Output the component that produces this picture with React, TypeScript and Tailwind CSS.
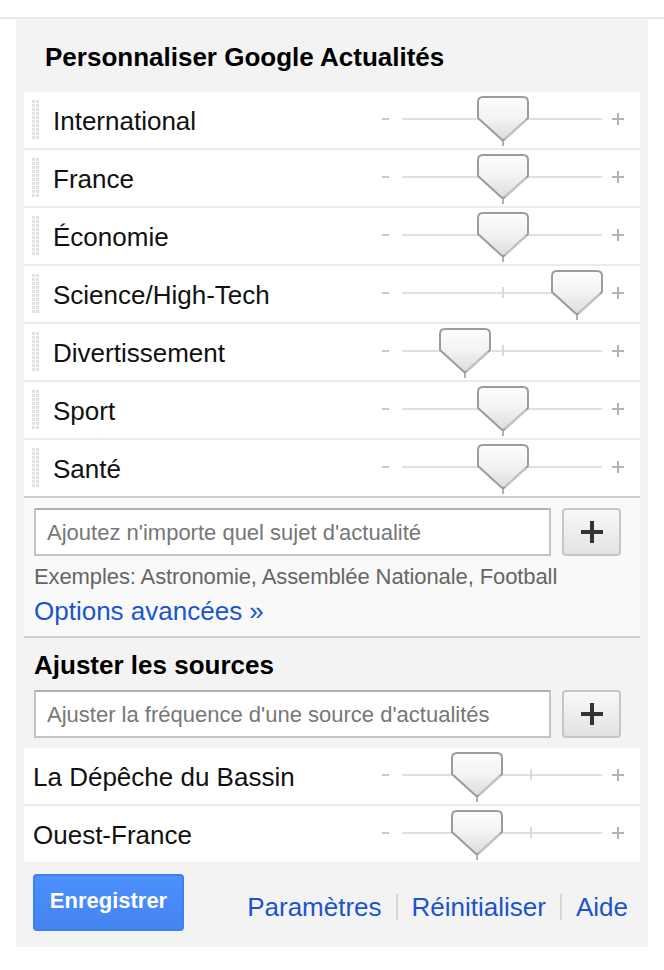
import React from "react";

function Thumb({ left }: { left: number }) {
  return (
    <svg
      className="absolute top-[4px]"
      style={{ left: left - 26 }}
      width="52"
      height="50"
      viewBox="0 0 52 50"
    >
      <defs>
        <linearGradient id="tg" x1="0" y1="0" x2="0" y2="1">
          <stop offset="0" stopColor="#fdfdfd" />
          <stop offset="0.5" stopColor="#f3f3f3" />
          <stop offset="1" stopColor="#dcdcdc" />
        </linearGradient>
      </defs>
      <line x1="26" y1="42" x2="26" y2="50" stroke="#b0b0b0" strokeWidth="2" />
      <path
        d="M6,1 H46 Q51,1 51,6 V22 L28,43 Q26,45 24,43 L1,22 V6 Q1,1 6,1 Z"
        fill="url(#tg)"
        stroke="#9c9c9c"
        strokeWidth="2"
      />
      <path d="M49,24 L28,43" stroke="#c4c4c4" strokeWidth="2" fill="none" />
    </svg>
  );
}

function Slider({ pos, tick = 127 }: { pos: number; tick?: number }) {
  return (
    <div className="relative w-[260px] h-[56px] shrink-0 ml-auto mr-[4px]">
      <div className="absolute left-[6px] top-[26px] w-[7px] h-[2px] bg-[#c9c9c9]" />
      <div className="absolute left-[26px] top-[26px] w-[200px] h-[2px] bg-[#e0e0e0]" />
      <div
        className="absolute top-[21px] w-[2px] h-[11px] bg-[#dadada]"
        style={{ left: tick - 1 }}
      />
      <svg className="absolute left-[236px] top-[21px]" width="12" height="12" viewBox="0 0 12 12">
        <rect x="5" y="0" width="2" height="12" fill="#b4b4b4" />
        <rect x="0" y="5" width="12" height="2" fill="#b4b4b4" />
      </svg>
      <Thumb left={pos} />
    </div>
  );
}

function Handle() {
  const rows = Array.from({ length: 10 });
  return (
    <svg className="shrink-0" width="8" height="40" viewBox="0 0 8 40">
      {rows.map((_, i) => (
        <g key={i}>
          <rect x="0" y={i * 4} width="3" height="3" fill="#e2e2e2" />
          <rect x="4" y={i * 4} width="3" height="3" fill="#e2e2e2" />
        </g>
      ))}
    </svg>
  );
}

function PlusButton() {
  return (
    <button className="w-[59px] h-[48px] shrink-0 rounded-[4px] border-2 border-[#c6c6c6] bg-gradient-to-b from-[#f8f8f8] to-[#e3e3e3] flex items-center justify-center">
      <svg width="22" height="22" viewBox="0 0 22 22">
        <rect x="9" y="0" width="4" height="22" fill="#333" />
        <rect x="0" y="9" width="22" height="4" fill="#333" />
      </svg>
    </button>
  );
}

const topics: { name: string; pos: number }[] = [
  { name: "International", pos: 127 },
  { name: "France", pos: 127 },
  { name: "Économie", pos: 127 },
  { name: "Science/High-Tech", pos: 201 },
  { name: "Divertissement", pos: 89 },
  { name: "Sport", pos: 127 },
  { name: "Santé", pos: 127 },
];

const sources = ["La Dépêche du Bassin", "Ouest-France"];

export default function App() {
  return (
    <div className="w-[664px] min-h-[970px] bg-white font-['Liberation_Sans',Arial,sans-serif] text-[#111]">
      <div className="h-[17px]" />
      <div className="h-[2px] bg-[#e8e8e8]" />
      <div className="ml-[16px] w-[632px] bg-[#f3f3f3] pt-[23px] pb-[16px]">
        <h1 className="pl-[29px] text-[26px] leading-[30px] font-bold text-black mb-[20px]">
          Personnaliser Google Actualités
        </h1>

        <div className="mx-[8px] bg-white">
          {topics.map((t, i) => (
            <div
              key={t.name}
              className={
                "flex items-center h-[58px] border-b-2 " +
                (i === topics.length - 1 ? "border-[#cfcfcf]" : "border-[#ebebeb]")
              }
            >
              <div className="pl-[8px] w-[29px] shrink-0 flex items-center">
                <Handle />
              </div>
              <span className="text-[26px] leading-[30px] pt-[2px] text-[#111]">{t.name}</span>
              <Slider pos={t.pos} />
            </div>
          ))}
        </div>

        <div className="mx-[8px] bg-[#f9f9f9] px-[10px] pt-[10px] pb-[10px] border-b-2 border-[#cfcfcf]">
          <div className="flex gap-[11px]">
            <div className="w-[517px] h-[48px] border-2 border-[#c4c4c4] border-t-[#b0b0b0] bg-white flex items-center pl-[11px]">
              <span className="text-[22px] text-[#777]">Ajoutez n'importe quel sujet d'actualité</span>
            </div>
            <PlusButton />
          </div>
          <div className="mt-[8px] text-[22px] leading-[26px] text-[#666] tracking-[-0.1px]">
            Exemples: Astronomie, Assemblée Nationale, Football
          </div>
          <div className="mt-[6px] text-[26px] leading-[30px] text-[#1a55cc]">Options avancées »</div>
        </div>

        <div className="mx-[8px] pt-[12px]">
          <h2 className="pl-[10px] text-[26px] leading-[30px] font-bold text-black">Ajuster les sources</h2>
          <div className="flex gap-[11px] px-[10px] mt-[10px]">
            <div className="w-[517px] h-[48px] border-2 border-[#c4c4c4] border-t-[#b0b0b0] bg-white flex items-center pl-[11px]">
              <span className="text-[22px] text-[#777]">Ajuster la fréquence d'une source d'actualités</span>
            </div>
            <PlusButton />
          </div>
          <div className="mt-[10px] bg-white">
            {sources.map((s, i) => (
              <div
                key={s}
                className={
                  "flex items-center " +
                  (i === 0 ? "h-[58px] border-b-2 border-[#ebebeb]" : "h-[56px]")
                }
              >
                <span className="pl-[9px] pt-[2px] text-[26px] leading-[30px] text-[#111]">{s}</span>
                <Slider pos={101} tick={155} />
              </div>
            ))}
          </div>
        </div>

        <div className="flex items-center mt-[12px] pl-[17px] pr-[20px]">
          <button className="w-[151px] h-[57px] rounded-[4px] border-2 border-[#3b82ee] bg-gradient-to-b from-[#4d90fe] to-[#4384f0] text-white font-bold text-[22px] leading-[26px] pb-[3px]">
            Enregistrer
          </button>
          <div className="ml-auto flex items-center pt-[8px] text-[26px] leading-[30px] text-[#1a55cc]">
            <span>Paramètres</span>
            <span className="mx-[14px] w-[2px] h-[26px] bg-[#d6d6d6]" />
            <span>Réinitialiser</span>
            <span className="mx-[14px] w-[2px] h-[26px] bg-[#d6d6d6]" />
            <span>Aide</span>
          </div>
        </div>
      </div>
    </div>
  );
}
